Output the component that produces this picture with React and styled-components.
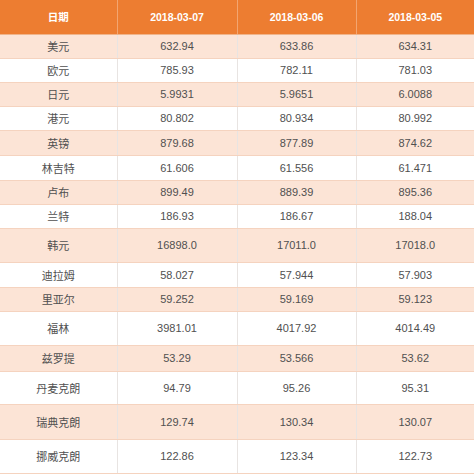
import React from "react";
import styled, { createGlobalStyle } from "styled-components";

const GlobalStyle = createGlobalStyle`
  html, body {
    margin: 0;
    padding: 0;
    background: #ffffff;
  }
  body {
    font-family: Arial, "Liberation Sans", "Noto Sans CJK SC", sans-serif;
  }
`;

const columns = [
  { label: "日期", w: 117 },
  { label: "2018-03-07", w: 120 },
  { label: "2018-03-06", w: 119 },
  { label: "2018-03-05", w: 118 },
];

const rates = [
  { name: "美元", h: 24, v: ["632.94", "633.86", "634.31"] },
  { name: "欧元", h: 24, v: ["785.93", "782.11", "781.03"] },
  { name: "日元", h: 24, v: ["5.9931", "5.9651", "6.0088"] },
  { name: "港元", h: 24, v: ["80.802", "80.934", "80.992"] },
  { name: "英镑", h: 25, v: ["879.68", "877.89", "874.62"] },
  { name: "林吉特", h: 25, v: ["61.606", "61.556", "61.471"] },
  { name: "卢布", h: 24, v: ["899.49", "889.39", "895.36"] },
  { name: "兰特", h: 24, v: ["186.93", "186.67", "188.04"] },
  { name: "韩元", h: 34, v: ["16898.0", "17011.0", "17018.0"] },
  { name: "迪拉姆", h: 25, v: ["58.027", "57.944", "57.903"] },
  { name: "里亚尔", h: 24, v: ["59.252", "59.169", "59.123"] },
  { name: "福林", h: 34, v: ["3981.01", "4017.92", "4014.49"] },
  { name: "兹罗提", h: 26, v: ["53.29", "53.566", "53.62"] },
  { name: "丹麦克朗", h: 33, v: ["94.79", "95.26", "95.31"] },
  { name: "瑞典克朗", h: 35, v: ["129.74", "130.34", "130.07"] },
  { name: "挪威克朗", h: 34, v: ["122.86", "123.34", "122.73"] },
];

const Table = styled.table`
  width: 474px;
  border-collapse: collapse;
  table-layout: fixed;
  font-family: Arial, "Liberation Sans", "Noto Sans CJK SC", sans-serif;
  font-size: 11px;
`;

const Col = styled.col`
  width: ${(p) => p.$w}px;
`;

const HeadRow = styled.tr`
  height: 34px;
  background: #ed7d31;
`;

const HeadCell = styled.th`
  padding: 0;
  color: #ffffff;
  font-weight: bold;
  font-size: 10.5px;
  text-align: center;
  vertical-align: middle;
  border-left: 1px solid #f3a570;
  border-bottom: 1px solid #f0b48a;
  &:first-child {
    border-left: none;
  }
`;

const Row = styled.tr`
  height: ${(p) => p.$h}px;
  background: ${(p) => (p.$shade ? "#fce4d6" : "#ffffff")};
`;

const Cell = styled.td`
  padding: 0;
  color: #505050;
  text-align: center;
  vertical-align: middle;
  border-left: 1px solid #e8e4e2;
  border-bottom: 1px solid #f5d3bf;
  &:first-child {
    border-left: none;
  }
`;

export default function App() {
  return (
    <>
      <GlobalStyle />
      <Table>
        <colgroup>
          {columns.map((c) => (
            <Col key={c.label} $w={c.w} />
          ))}
        </colgroup>
        <thead>
          <HeadRow>
            {columns.map((c) => (
              <HeadCell key={c.label}>{c.label}</HeadCell>
            ))}
          </HeadRow>
        </thead>
        <tbody>
          {rates.map((r, i) => (
            <Row key={r.name} $h={r.h} $shade={i % 2 === 0}>
              <Cell>{r.name}</Cell>
              {r.v.map((x, j) => (
                <Cell key={j}>{x}</Cell>
              ))}
            </Row>
          ))}
        </tbody>
      </Table>
    </>
  );
}
